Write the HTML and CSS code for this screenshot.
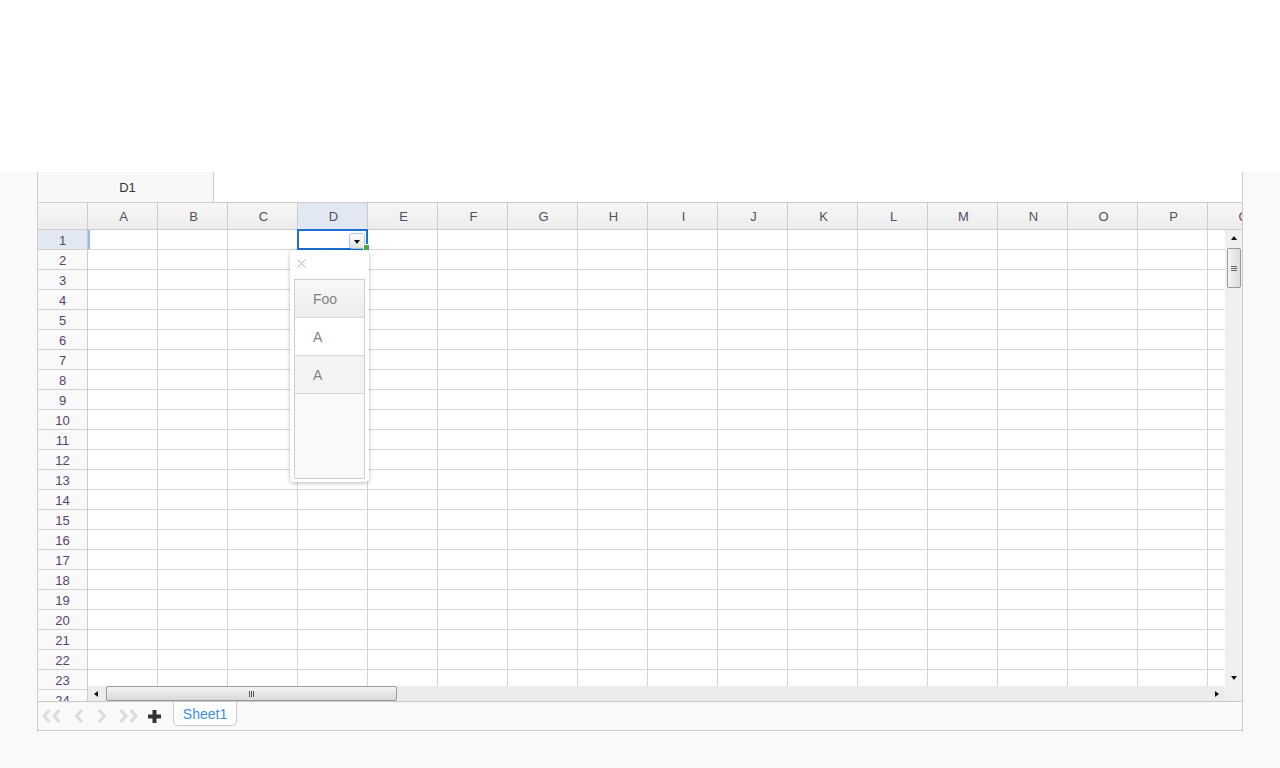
FILE: index.html
```html
<!DOCTYPE html>
<html>
<head>
<meta charset="utf-8">
<title>Spreadsheet</title>
<link rel="stylesheet" href="styles.css">
</head>
<body>
<div class="topspace"></div>
<div class="book">
  <div class="formula-bar">
    <div class="namebox">D1</div>
    <div class="formula"></div>
  </div>
  <div class="col-headers">
    <div class="corner"></div>
    <div class="ch">A</div><div class="ch">B</div><div class="ch">C</div><div class="ch sel">D</div>
    <div class="ch">E</div><div class="ch">F</div><div class="ch">G</div><div class="ch">H</div>
    <div class="ch">I</div><div class="ch">J</div><div class="ch">K</div><div class="ch">L</div>
    <div class="ch">M</div><div class="ch">N</div><div class="ch">O</div><div class="ch">P</div>
    <div class="ch">Q</div>
  </div>
  <div class="body">
    <div class="row-headers">
      <div class="rh sel">1</div><div class="rh">2</div><div class="rh">3</div><div class="rh">4</div>
      <div class="rh">5</div><div class="rh">6</div><div class="rh">7</div><div class="rh">8</div>
      <div class="rh">9</div><div class="rh">10</div><div class="rh">11</div><div class="rh">12</div>
      <div class="rh">13</div><div class="rh">14</div><div class="rh">15</div><div class="rh">16</div>
      <div class="rh">17</div><div class="rh">18</div><div class="rh">19</div><div class="rh">20</div>
      <div class="rh">21</div><div class="rh">22</div><div class="rh">23</div><div class="rh">24</div>
    </div>
    <div class="cells">
      <div class="row-mark"></div>
      <div class="selection">
        <span class="dd-btn"><span class="tri-down"></span></span>
        <span class="fill-handle"></span>
      </div>
      <div class="popup">
        <svg class="close" width="9" height="9" viewBox="0 0 9 9"><path d="M0.5 0.5 L8.5 8.5 M8.5 0.5 L0.5 8.5" stroke="#a9b5cc" stroke-width="1" fill="none"/></svg>
        <div class="list">
          <div class="item first">Foo</div>
          <div class="item">A</div>
          <div class="item hover">A</div>
          <div class="list-empty"></div>
        </div>
      </div>
    </div>
    <div class="vscroll">
      <span class="arrow-box"><span class="tri-up"></span></span>
      <span class="vthumb"><span class="grip-h"></span></span>
      <span class="spacer"></span>
      <span class="arrow-box"><span class="tri-down"></span></span>
    </div>
    <div class="hscroll">
      <span class="arrow-box-h"><span class="tri-left"></span></span>
      <span class="hthumb"><span class="grip-v"></span></span>
      <span class="spacer"></span>
      <span class="arrow-box-h"><span class="tri-right"></span></span>
    </div>
    <div class="sc-corner"></div>
  </div>
  <div class="tabbar">
    <svg class="nav first" width="22" height="14" viewBox="0 0 22 14"><path d="M8.5 1 L3 7 L8.5 13 M18.5 1 L13 7 L18.5 13" stroke="#dcdcdc" stroke-width="3" fill="none"/></svg>
    <svg class="nav prev" width="10" height="14" viewBox="0 0 10 14"><path d="M8 1 L2.5 7 L8 13" stroke="#dcdcdc" stroke-width="3" fill="none"/></svg>
    <svg class="nav next" width="10" height="14" viewBox="0 0 10 14"><path d="M2 1 L7.5 7 L2 13" stroke="#dcdcdc" stroke-width="3" fill="none"/></svg>
    <svg class="nav last" width="22" height="14" viewBox="0 0 22 14"><path d="M3.5 1 L9 7 L3.5 13 M13.5 1 L19 7 L13.5 13" stroke="#dcdcdc" stroke-width="3" fill="none"/></svg>
    <svg class="nav add" width="13" height="13" viewBox="0 0 13 13"><rect x="0" y="4.5" width="13" height="4" fill="#333"/><rect x="4.5" y="0" width="4" height="13" fill="#333"/></svg>
    <div class="tab">Sheet1</div>
  </div>
</div>
</body>
</html>
```
FILE: styles.css
```css
* { box-sizing: border-box; }

body {
  margin: 0;
  background: #f9f9f9;
  font-family: "Liberation Sans", Arial, sans-serif;
}

.topspace {
  height: 172px;
  background: #fff;
}

.book {
  margin-left: 37px;
  width: 1206px;
  border: 1px solid #ccc;
  border-top: 0;
  background: #fff;
}

.formula-bar {
  display: flex;
  height: 31px;
  border-bottom: 1px solid #ccc;
  background: #fff;
}

.namebox {
  width: 176px;
  border-right: 1px solid #ccc;
  background: #f8f8f8;
  display: flex;
  align-items: center;
  justify-content: center;
  padding-left: 4px;
  font-size: 13px;
  color: #3a2f3f;
}

.formula { flex: 1; }

.col-headers {
  display: flex;
  height: 27px;
  border-bottom: 1px solid #ccc;
  overflow: hidden;
  background: linear-gradient(#f7f7f7, #ececec);
}

.corner {
  flex: 0 0 50px;
  border-right: 1px solid #ccc;
}

.ch {
  flex: 0 0 70px;
  border-right: 1px solid #ccc;
  display: flex;
  align-items: center;
  justify-content: center;
  padding-left: 2px;
  font-size: 13px;
  color: #5a4a66;
}

.ch.sel {
  background: #e2e8f2;
}

.body {
  display: grid;
  grid-template-columns: 50px 1137px 17px;
  grid-template-rows: 456px 15px;
  height: 471px;
}

.row-headers {
  grid-row: 1 / 3;
  grid-column: 1;
  overflow: hidden;
  background: #f9f9f9;
  border-right: 1px solid #ccc;
}

.rh {
  height: 20px;
  border-bottom: 1px solid #d2d2d2;
  display: flex;
  align-items: center;
  justify-content: center;
  padding-top: 1px;
  font-size: 13px;
  color: #5a3f72;
}

.rh.sel {
  background: #e2e8f2;
}

.cells {
  grid-row: 1;
  grid-column: 2;
  position: relative;
  background-color: #fff;
  background-image:
    linear-gradient(to right, transparent 69px, #d4d4d4 69px),
    linear-gradient(to bottom, transparent 19px, #d4d4d4 19px);
  background-size: 70px 100%, 100% 20px;
}

.row-mark {
  position: absolute;
  left: 0;
  top: 0;
  width: 2px;
  height: 19px;
  background: #8cbcf2;
}

.selection {
  position: absolute;
  left: 209px;
  top: -1px;
  width: 71px;
  height: 21px;
  border: 2px solid #1e6fd6;
}

.dd-btn {
  position: absolute;
  left: 50px;
  top: 2px;
  width: 16px;
  height: 16px;
  border: 1px solid #a6c8ef;
  border-radius: 3px;
  background: linear-gradient(#ffffff, #e4e4e4);
  display: flex;
  align-items: center;
  justify-content: center;
  padding-top: 2px;
}

.tri-down {
  width: 0;
  height: 0;
  border-left: 3.5px solid transparent;
  border-right: 3.5px solid transparent;
  border-top: 4px solid #111;
}

.tri-up {
  width: 0;
  height: 0;
  border-left: 3.5px solid transparent;
  border-right: 3.5px solid transparent;
  border-bottom: 4px solid #111;
}

.tri-left {
  width: 0;
  height: 0;
  border-top: 3.5px solid transparent;
  border-bottom: 3.5px solid transparent;
  border-right: 4px solid #111;
}

.tri-right {
  width: 0;
  height: 0;
  border-top: 3.5px solid transparent;
  border-bottom: 3.5px solid transparent;
  border-left: 4px solid #111;
}

.fill-handle {
  position: absolute;
  left: 64px;
  top: 13px;
  width: 7px;
  height: 7px;
  background: #44b238;
  border: 1px solid #fff;
}

.popup {
  position: absolute;
  left: 202px;
  top: 20px;
  width: 79px;
  height: 232px;
  background: #fff;
  border-radius: 4px;
  box-shadow: 0 1px 4px rgba(0, 0, 0, 0.28);
  padding: 9px 4px 0 4px;
}

.close {
  display: block;
  margin-left: 3px;
}

.list {
  margin-top: 11px;
  width: 71px;
  height: 200px;
  border: 1px solid #cfcfcf;
  display: flex;
  flex-direction: column;
  background: #f9f9f9;
}

.item {
  height: 38px;
  flex: 0 0 38px;
  border-bottom: 1px solid #d6d6d6;
  display: flex;
  align-items: center;
  padding-left: 18px;
  font-size: 14px;
  color: #808080;
  background: #fff;
}

.item.first {
  background: linear-gradient(#f8f8f8, #ededed);
}

.item.hover {
  background: #f3f3f3;
}

.list-empty {
  flex: 1;
}

.vscroll {
  grid-row: 1;
  grid-column: 3;
  background: #f0f0f0;
  display: flex;
  flex-direction: column;
}

.arrow-box {
  height: 16px;
  flex: 0 0 16px;
  display: flex;
  align-items: center;
  justify-content: center;
  padding-left: 1px;
}

.vthumb {
  margin: 2px 0 0 2px;
  width: 14px;
  height: 40px;
  flex: 0 0 40px;
  border: 1px solid #9a9a9a;
  border-radius: 2px;
  background: linear-gradient(to right, #f4f4f4, #dcdcdc);
  display: flex;
  align-items: center;
  justify-content: center;
}

.grip-h {
  width: 6px;
  height: 5px;
  border-top: 1px solid #666;
  border-bottom: 1px solid #666;
  position: relative;
}

.grip-h::after {
  content: "";
  position: absolute;
  left: 0;
  right: 0;
  top: 1px;
  height: 1px;
  background: #666;
}

.spacer { flex: 1; }

.hscroll {
  grid-row: 2;
  grid-column: 2;
  background: #ececec;
  display: flex;
  align-items: stretch;
}

.arrow-box-h {
  width: 16px;
  flex: 0 0 16px;
  display: flex;
  align-items: center;
  justify-content: center;
}

.hthumb {
  margin-left: 2px;
  width: 291px;
  flex: 0 0 291px;
  border: 1px solid #9a9a9a;
  border-radius: 2px;
  background: linear-gradient(#f4f4f4, #d9d9d9);
  display: flex;
  align-items: center;
  justify-content: center;
}

.grip-v {
  width: 5px;
  height: 6px;
  border-left: 1px solid #555;
  border-right: 1px solid #555;
  position: relative;
}

.grip-v::after {
  content: "";
  position: absolute;
  top: 0;
  bottom: 0;
  left: 1px;
  width: 1px;
  background: #555;
}

.sc-corner {
  grid-row: 2;
  grid-column: 3;
  background: #f0f0f0;
}

.tabbar {
  height: 29px;
  border-top: 1px solid #c8c8c8;
  background: #f9f9f9;
  display: flex;
  align-items: center;
}

.nav { flex: 0 0 auto; display: block; }
.nav.first { margin-left: 3px; }
.nav.prev { margin-left: 11px; }
.nav.next { margin-left: 13px; }
.nav.last { margin-left: 10px; }
.nav.add { margin-left: 9px; }

.tab {
  align-self: flex-start;
  margin-left: 12px;
  width: 64px;
  height: 24px;
  border: 1px solid #ccc;
  border-top: 0;
  border-radius: 0 0 5px 5px;
  background: #fff;
  display: flex;
  align-items: center;
  justify-content: center;
  font-size: 14px;
  color: #3b8fe2;
}
```
